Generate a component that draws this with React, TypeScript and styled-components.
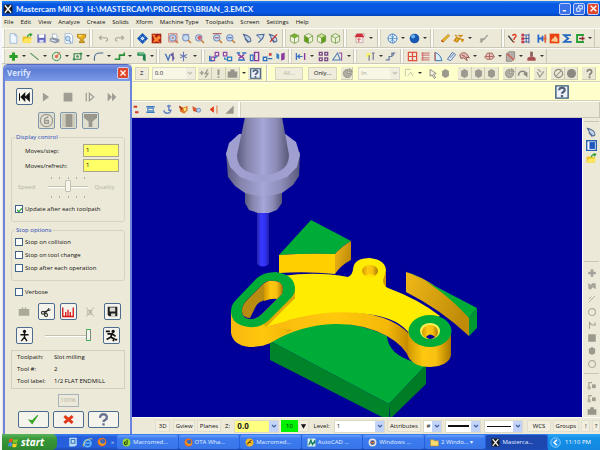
import React from "react";
import styled, { createGlobalStyle, css } from "styled-components";

const Global = createGlobalStyle`
  * { box-sizing: border-box; }
  html, body { margin: 0; height: 100%; }
  #root { height: 100%; }
  body {
    background: #fff;
    font: 6px/10px "Open Sans", "Noto Sans", sans-serif;
    color: #111;
    overflow: hidden;
  }
  button, input, select { font: inherit; color: inherit; margin: 0; padding: 0; border: 0; background: none; border-radius: 0; }
  svg { display: block; }
`;

/* ---------- icon drawings, 16 x 16 grid ---------- */

const stroke = (color: string, width = 1.6) => ({ stroke: color, strokeWidth: width, fill: "none" });

const lens = (mark: React.ReactNode) => (
  <>
    <circle cx="7" cy="7" r="4.6" fill="#c8dcf4" stroke="#7890c0" strokeWidth="1.5" />
    <path d="M10.5 10.5 L14.5 14.5" {...stroke("#c88040", 2.4)} />
    {mark}
  </>
);

const cube = (left: string, right: string, top: string) => (
  <>
    <path d="M8 1 L14 4 L8 7.5 L2 4Z" fill={top} />
    <path d="M2 4 L8 7.5 V15 L2 12Z" fill={left} />
    <path d="M14 4 L8 7.5 V15 L14 12Z" fill={right} />
    <path d="M8 1 L14 4 V12 L8 15 L2 12 V4Z M2 4 L8 7.5 L14 4 M8 7.5 V15" {...stroke("#6c9838", 1.1)} />
  </>
);

const plane = (extra: React.ReactNode) => (
  <>
    <path d="M2 2 C8 3 14 7 13 11 C12 15 7 13 2 2Z M4 8 L9 14" fill="#c4d4e8" stroke="#506890" strokeWidth="1.5" />
    {extra}
  </>
);

const grayDot = <path d="M8 1.5 L13 4.5 V11.5 L8 14.5 L3 11.5 V4.5Z" fill="#9c9a8e" />;

const drawings: Record<string, React.ReactNode> = {
  newFile: <path d="M3 1 H10 L13 4 V15 H3Z M10 1 V4 H13" fill="#eef6ff" stroke="#88a8d0" />,
  open: (
    <>
      <path d="M1 5 H6 L8 6 H13 V14 H1Z" fill="#f0c020" />
      <path d="M4 8 H15 L12 14 H1Z" fill="#ffe860" />
      <path d="M8 6 C8 2 11 2 14 2 M11 1 L14 2 L12 5" {...stroke("#30a030", 1.8)} />
    </>
  ),
  save: (
    <>
      <path d="M2 2 H14 V14 H2Z" fill="#6468c0" />
      <path d="M4 2 H12 V7 H4Z" fill="#fff" />
      <path d="M5 10 H11 V14 H5Z" fill="#d8dcf4" />
    </>
  ),
  print: (
    <>
      <path d="M5 1 L11 2 L12 8 H5Z" fill="#fff" stroke="#90a8c8" />
      <path d="M1 8 L5 6 L15 9 V13 L9 15 L1 12Z" fill="#8c98a8" />
      <path d="M3 10 L10 12" {...stroke("#e8eef8")} />
    </>
  ),
  preview: (
    <>
      <path d="M3 1 H11 L14 4 V15 H3Z" fill="#fff" stroke="#80a8d0" />
      <circle cx="7" cy="8" r="3.5" fill="#c0dcf4" stroke="#5888b8" />
      <path d="M9 11 L12 14" {...stroke("#5888b8")} />
    </>
  ),
  trophy: (
    <>
      <path d="M2 2 H14 V6 L10 9 V12 H12 V14 H5 V12 H7 V9 L2 6Z" fill="#e8b018" stroke="#986808" />
      <path d="M4 4 H8" {...stroke("#ffec80", 2)} />
    </>
  ),
  undo: <path d="M5 4 L2 7 L5 10 M2 7 H10 C15 7 15 12 11 12" {...stroke("#a8a498")} />,
  redo: <path d="M11 4 L14 7 L11 10 M14 7 H6 C1 7 1 12 5 12" {...stroke("#a8a498")} />,
  pan: (
    <>
      <path d="M8 0 L16 8 L8 16 L0 8Z" fill="#1858b8" />
      <path d="M8 5 L11 8 L8 11 L5 8Z" fill="#f4f8ff" />
      <path d="M4 4 L12 12 M12 4 L4 12" {...stroke("#80b0e8", 0.8)} />
    </>
  ),
  fit: (
    <>
      <path d="M1 1 H15 V15 H1Z" fill="#a82010" />
      <path d="M2 2 L7 3 L5 5 L8 7 L12 3 L14 8 L10 10 L14 14 L8 12 L3 14 L5 9Z" fill="#ff8830" />
    </>
  ),
  zoomWindow: lens(<path d="M1 1 H13 V13 H1Z M5 7 H9 M7 5 V9" {...stroke("#c86868", 1.2)} />),
  zoomTarget: lens(<path d="M2 2 H12" {...stroke("#7080b8", 1)} />),
  zoomIn: lens(<circle cx="8" cy="7" r="3" fill="#d86060" />),
  zoomOut: lens(<path d="M1 1 H14 M4 7 H10" {...stroke("#a04848", 1.4)} />),
  unzoom: lens(<path d="M4 7 H10" {...stroke("#4068b0", 1.6)} />),
  plane: plane(null),
  planeUp: (
    <>
      <path d="M2 3 L13 2 L11 8 L5 14 M3 3 L9 9" {...stroke("#486898", 1.8)} />
      <path d="M4 4 L12 3 L9 9Z" fill="#c4d8ec" />
    </>
  ),
  planeCut: plane(<path d="M3 13 L13 2" {...stroke("#d03020", 1.8)} />),
  cubeTop: cube("#f0f4e0", "#f0f4e0", "#78b028"),
  cubeLeft: cube("#60a018", "#e8f0d0", "#f0f4e0"),
  cubeRight: cube("#f0f4e0", "#60a018", "#c8e090"),
  cubeWire: cube("#eaf0d8", "#eaf0d8", "#eaf0d8"),
  cplane: (
    <>
      <path d="M1 4 L4 1 H15 V4 L13 6 V14 H3 V6Z" fill="#f8f0ec" stroke="#c09090" />
      <path d="M1 6 L4 1 H12 L15 6Z" fill="#d02c38" />
      <path d="M5 9 H10 M7 7 V13" {...stroke("#d86868")} />
    </>
  ),
  globe: (
    <>
      <circle cx="8" cy="8" r="6.5" fill="#e4f0fc" stroke="#4888c8" strokeWidth="1.4" />
      <path d="M1 8 H15 M8 1 V15 M4 3 C9 6 9 10 4 13 M12 3 C7 6 7 10 12 13" {...stroke("#4888c8", 1)} />
    </>
  ),
  sphere: (
    <>
      <circle cx="8" cy="8" r="7" fill="#1858b0" />
      <circle cx="6" cy="5" r="3" fill="#68b0f0" />
    </>
  ),
  eraser: (
    <>
      <path d="M2 11 L12 2 L14 4 L5 13Z" fill="#f0b820" stroke="#a88028" />
      <path d="M2 11 L5 13" {...stroke("#c05020", 2)} />
    </>
  ),
  eraserDots: <path d="M2 11 L6 13 L10 8 L5 7Z M8 3 L11 5 L14 3 M11 9 L15 10 L13 13 M3 3 L6 5" fill="#e8b828" stroke="#c88818" strokeWidth="2" />,
  grayPen: <path d="M3 13 L7 8 L9 9 L14 3 M4 9 H8 L5 13Z" {...stroke("#a4a298", 2)} />,
  analyze: (
    <>
      <path d="M2 4 L9 13" {...stroke("#484040", 2)} />
      <path d="M8 4 C9 1 14 2 13 5 C12 7 10 7 10 10 M10 12 V14" {...stroke("#e03818", 2)} />
    </>
  ),
  levels: (
    <>
      <path d="M2 1 H6 V5 H2Z M2 6 H6 V10 H2Z M2 11 H6 V15 H2Z" fill="#c83850" />
      <path d="M6 3 H13 M6 8 H13 M6 13 H13 M13 1 V15 M9 4 V13" {...stroke("#4860a8", 1.6)} />
    </>
  ),
  mirrorBlue: (
    <>
      <path d="M2 2 V14 M2 8 H8 M8 4 V12" {...stroke("#2868c8", 2.6)} />
      <path d="M12 2 V14 M9 8 H14" {...stroke("#e06840", 2.6)} />
    </>
  ),
  flame: (
    <>
      <path d="M1 1 H15 V15 H1Z" fill="#e84010" />
      <path d="M3 12 C5 6 8 9 8 4 C14 7 13 12 12 13Z" fill="#ffc890" />
    </>
  ),
  sigma: <path d="M13 3 H3 L9 8 L3 13 H14" {...stroke("#2068c0", 2.6)} />,
  loop: (
    <>
      <path d="M13 3 H3 V13 H13" {...stroke("#28a038", 2.8)} />
      <path d="M6 8 H14 M11 5 V11" {...stroke("#902838", 2)} />
    </>
  ),
  plus: <path d="M8 2 V14 M2 8 H14" {...stroke("#28a028", 4.4)} />,
  line: <path d="M2 3 L14 13" {...stroke("#489058", 1.5)} />,
  circle: (
    <>
      <circle cx="8" cy="8" r="6" {...stroke("#30904c", 1.4)} />
      <circle cx="8" cy="8" r="2.4" fill="#e07050" />
      <path d="M8 8 L13 2" {...stroke("#e07050")} />
    </>
  ),
  rect: (
    <>
      <path d="M3 4 H13 V12 H3Z" {...stroke("#308048", 1.6)} />
      <path d="M7 7 H9 V9 H7Z M1 12 H5 M11 4 H15 M3 10 V14 M13 2 V6" {...stroke("#308848", 1.4)} />
    </>
  ),
  fillet: <path d="M2 14 V10 C2 5 6 3 10 3 H15" {...stroke("#4c6890", 1.6)} />,
  spline: <path d="M1 12 H8 V6 H15 V2" {...stroke("#289038", 2.4)} />,
  solid: (
    <>
      <path d="M2 2 H11 L14 5 V15 L10 13 V7 H2Z" fill="#208048" />
      <path d="M2 2 H11 L14 5 H5Z" fill="#70c090" />
    </>
  ),
  axes: (
    <>
      <path d="M2 4 L6 13 L9 5" {...stroke("#4070b8", 2)} />
      <path d="M13 2 V14 M10 4 L15 11" {...stroke("#6850a0", 2)} />
    </>
  ),
  starAxes: <path d="M8 1 V15 M3 5 L13 10 M13 5 L3 10" {...stroke("#6878b8", 1.6)} />,
  xformA: (
    <>
      <path d="M9 2 H14 V7 H9Z M3 9 H8 V14 H3Z" {...stroke("#9048a8", 1.8)} />
      <path d="M1 7 V14 H6 M8 10 L12 8" {...stroke("#2870c0", 2)} />
    </>
  ),
  xformB: (
    <>
      <path d="M2 2 H7 V7 H2Z" {...stroke("#9048a8", 1.8)} />
      <path d="M8 9 H14 V14 H8Z M4 9 V12 H8" {...stroke("#2878c0", 1.8)} />
    </>
  ),
  xformC: (
    <>
      <path d="M1 3 H6 M9 3 H15 M3 13 H13" {...stroke("#2870c0", 2.2)} />
      <path d="M3 5 L12 11 M12 5 L4 11" {...stroke("#8838a0", 2)} />
    </>
  ),
  xformD: (
    <>
      <path d="M8 2 H14 V14 H8Z" {...stroke("#8838a0", 2)} />
      <path d="M2 6 H6 V14 H2Z" {...stroke("#2870c0", 1.6)} />
    </>
  ),
  xformE: (
    <>
      <path d="M2 9 H7 V14 H2Z M9 11 H15" {...stroke("#2870c0", 2)} />
      <path d="M10 3 H14 V7 H10Z" fill="#d04848" />
    </>
  ),
  xformF: (
    <>
      <path d="M2 3 L6 5 V12 L2 10Z" fill="#3080c8" />
      <path d="M9 4 L14 2 V12 L9 14Z" fill="#8838a0" />
    </>
  ),
  arrowBar: (
    <>
      <path d="M2 3 V13 M4 8 H11 M7 5 L4 8 L7 11" {...stroke("#3870c0", 1.8)} />
      <path d="M14 3 V13" {...stroke("#8838a0", 2)} />
    </>
  ),
  fourSquares: <path d="M2 2 H6 V6 H2Z M10 2 H14 V6 H10Z M2 10 H6 V14 H2Z M10 10 H14 V14 H10Z" {...stroke("#784888", 2)} />,
  triangle: (
    <>
      <path d="M1 13 L8 3 L12 13Z" {...stroke("#4878b8", 1.5)} />
      <path d="M10 3 H14 V14" {...stroke("#9048a0", 1.5)} />
    </>
  ),
  bulb: (
    <>
      <path d="M2 3 H8 V9 H2Z" fill="#f8f070" />
      <path d="M6 6 V14 M12 3 V13 M10 3 H14" {...stroke("#788090", 1.8)} />
    </>
  ),
  steps: <path d="M1 13 H6 V8 H10 V3 H15 M12 3 V7" {...stroke("#6c7ca0", 1.8)} />,
  gridRed: <path d="M2 2 H14 V14 H2Z M8 2 V14 M2 8 H14" {...stroke("#e05040", 1.8)} />,
  linesRed: <path d="M2 3 H14 M2 6 H14 M2 10 H14 M2 13 H14 M4 2 V14" {...stroke("#c86868", 1.4)} />,
  fan: (
    <>
      <path d="M3 14 V2 C9 4 12 9 13 14Z" fill="#d8ecfa" stroke="#3078b0" strokeWidth="1.4" />
      <path d="M3 2 V14" {...stroke("#d06050")} />
    </>
  ),
  tube: <path d="M2 12 L9 2 L14 5 L7 14Z M6 10 L11 4" fill="#dce8f4" stroke="#5878a8" strokeWidth="1.4" />,
  fish: <path d="M1 6 C4 1 10 2 12 5 L15 10 L10 9 L12 14 L7 10 L3 11Z M4 6 L9 8" fill="#e0b8b0" stroke="#985850" strokeWidth="1.4" />,
  patch: <path d="M1 9 L5 3 H12 L15 9 L11 12 H4Z M8 3 V12 M2 8 H14" fill="#e8c0b8" stroke="#a86860" strokeWidth="1.4" />,
  hatched: (
    <>
      <path d="M2 4 L6 1 H14 V11 L10 15 H2Z" fill="#b4aca8" stroke="#807870" />
      <path d="M3 4 L13 13" {...stroke("#d05848", 2)} />
    </>
  ),
  tower: (
    <>
      <path d="M6 1 H10 V8 H6Z" fill="#8c6060" />
      <path d="M2 14 V10 L6 8 H10 L14 10 V14Z" fill="#a85050" />
    </>
  ),
  help: (
    <>
      <path d="M1 1 H15 V15 H1Z" fill="#eef2f8" stroke="#34587c" strokeWidth="1.6" />
      <path d="M5 6 C4 2 12 2 11 6 C11 8 8 8 8 10 M8 11.5 V14" {...stroke("#506078", 2.6)} />
    </>
  ),
  gBolt: <path d="M1 7 H7 M4 4 V10 M13 2 L9 8 H13 L9 14" {...stroke("#a09e90", 2)} />,
  gBang: <path d="M8 2 V10 M8 12 V14" {...stroke("#98968a", 2.8)} />,
  gBox: <path d="M1 5 H5 V2 H11 V5 H15 V14 H1Z" fill="#98968a" />,
  gCursor: <path d="M3 2 L12 8 L8 9 L11 14 L9 15 L6 10 L3 12Z" fill="#f4f2e4" stroke="#88867a" strokeWidth="1.3" />,
  gDot: grayDot,
  gPie: <path d="M8 2 A6 6 0 1 0 14 8 H8Z M10 1 A6 6 0 0 1 15 6 H10Z" fill="#b0aea2" stroke="#88867a" />,
  gArc: <path d="M2 11 C3 3 12 3 13 9 M10 8 L14 11 L14 6" {...stroke("#8c8a80", 2.4)} />,
  gCheck: <path d="M3 6 L7 13 L13 5 M4 2 L9 6" {...stroke("#98968a", 1.6)} />,
  gNo: <path d="M8 2 A6 6 0 1 0 8.1 2 M4 12 L12 4" {...stroke("#8c8a80", 1.5)} />,
  gRound: <circle cx="8" cy="8" r="6.6" fill="#8c8a80" />,
  gQuestion: <path d="M5 6 C4 1 12 1 11 6 C11 8 8 8 8 11 M8 12 V15" {...stroke("#88867a", 2.6)} />,
  gSelect: <path d="M2 2 H10 M2 2 V12 M5 12 L10 6 L13 12" {...stroke("#c4c2a8", 1.3)} />,
  gPlus: <path d="M8 2 V14 M2 8 H14" {...stroke("#a4a298", 4.2)} />,
  gWave: <path d="M2 3 L6 6 L9 3 L14 4 V13 L9 10 L6 14 L2 12Z" fill="#a8a69a" />,
  gSlash: <path d="M3 13 L13 3 M3 8 L7 4" {...stroke("#aeac9f", 1.5)} />,
  gRing: <circle cx="8" cy="8" r="5.5" {...stroke("#b0ae9f", 1.8)} />,
  gFlag: <path d="M4 14 V4 L8 8 H13 V4" {...stroke("#a4a298", 1.8)} />,
  gSquare: <path d="M2 2 H14 V14 H2Z" fill="#9c9a8e" />,
  gNodes: (
    <>
      <path d="M3 12 V4 H8" {...stroke("#a8a69a", 2)} />
      <path d="M8 7 H14 V13 H8Z" fill="#a09e92" />
      <path d="M1 10 H6 V15 H1Z" fill="#b4b2a6" />
    </>
  ),
  surface: (
    <>
      <path d="M2 4 H14 M2 12 H14" {...stroke("#3878c0", 2.4)} />
      <path d="M4 6 H12 V10 H4Z" {...stroke("#4888c8", 1.6)} />
    </>
  ),
  hook: <path d="M10 1 V8 M7 3 H13 M3 9 C3 15 12 15 13 9 H9" {...stroke("#6080c0", 2)} />,
  shield: (
    <>
      <path d="M2 3 L8 5 L14 3 V9 L9 14 L3 11Z" fill="#e07828" />
      <path d="M8 6 L12 5 V9 L9 11Z" fill="#f4e870" />
      <path d="M2 3 L6 8" {...stroke("#a02818", 2)} />
    </>
  ),
  shield2: (
    <>
      <path d="M2 3 L8 6 L9 12 L3 10Z" fill="#d85830" />
      <circle cx="11" cy="9" r="3" fill="#b0d0f0" stroke="#5078b0" />
    </>
  ),
  redArrow: (
    <>
      <path d="M8 4 L3 8 L8 12Z" fill="#e03818" stroke="#e03818" />
      <path d="M13 2 V14" {...stroke("#e08058", 1.6)} />
    </>
  ),
  ramp: <path d="M2 14 L14 2 V14Z" fill="#98968c" />,
  redDash: <path d="M1 4 H6 M3 12 H8" {...stroke("#d03828", 3)} />,
  blueWindow: (
    <>
      <path d="M1 1 H15 V15 H1Z" fill="#fff" stroke="#2860b0" strokeWidth="2" />
      <path d="M5 3 H13 V13 H5Z" fill="#2058c0" />
    </>
  ),
  rewind: <path d="M2 3 V13 M9 3 L4 8 L9 13Z M15 3 L10 8 L15 13Z" fill="#111" stroke="#111" strokeWidth="1.4" />,
  play: <path d="M3 1 L13 8 L3 15Z" fill="#a09e94" />,
  stop: <path d="M1 1 H15 V15 H1Z" fill="#a09e94" />,
  stepFwd: <path d="M2 1 V15 M7 2 L14 8 L7 14Z" {...stroke("#a09e94", 2)} />,
  fast: <path d="M1 1 L8 8 L1 15Z M8 1 L15 8 L8 15Z" fill="#a09e94" />,
  coin: (
    <>
      <circle cx="8" cy="8" r="6.5" fill="#e4e2d6" stroke="#9c9a90" strokeWidth="1.3" />
      <path d="M10 4 L6 6 V11 H10 V8 H6" {...stroke("#9c9a90", 1.5)} />
    </>
  ),
  holder: (
    <>
      <path d="M1 1 H15 V15 H1Z" fill="#cccab8" />
      <path d="M5 1 H12 V15 H5Z" fill="#9a988c" />
    </>
  ),
  funnel: <path d="M1 1 H15 V5 L10 9 V15 H6 V9 L1 5Z" fill="#9a988c" />,
  stock: <path d="M1 4 H5 V2 H7 V4 H9 V2 H11 V4 H15 V13 H1Z" fill="#aaa898" />,
  scissors: (
    <>
      <circle cx="4" cy="9" r="2" {...stroke("#222", 1.5)} />
      <circle cx="8" cy="12" r="2" {...stroke("#222", 1.5)} />
      <path d="M5 8 L14 5 M7 10 L12 3" {...stroke("#222", 1.5)} />
    </>
  ),
  chart: <path d="M1 2 V14 H15 V2 M5 14 V8 M8 14 V5 M11 14 V8" {...stroke("#d81818", 1.8)} />,
  burst: <path d="M3 2 L13 14 M13 2 L3 14 M5 6 H10 V11 H5Z" {...stroke("#b4b2a6", 1.3)} />,
  disk: (
    <>
      <path d="M1 1 H15 V15 H3 L1 13Z" fill="#222" />
      <path d="M4 2 H12 V8 H4Z M6 11 H12 V15 H6Z" fill="#dcdcd4" />
    </>
  ),
  walker: (
    <>
      <circle cx="8" cy="3" r="2" fill="#111" />
      <path d="M8 5 V10 M3 7 H13 M8 10 L4 15 M8 10 L11 15" {...stroke("#111", 1.7)} />
    </>
  ),
  runner: (
    <>
      <circle cx="10" cy="3" r="2" fill="#111" />
      <path d="M9 5 L7 10 L11 12 L10 15 M7 10 L2 13 M3 6 L9 6 L13 9 M1 3 H6 M12 13 H15" {...stroke("#111", 2.1)} />
    </>
  ),
  tick: <path d="M2 9 L6 14 L14 2 L6 10Z" fill="#38a828" stroke="#38a828" strokeWidth="1.6" />,
  cross: <path d="M2 3 L14 13 M14 3 L2 13" {...stroke("#e03818", 4.4)} />,
  bigHelp: <path d="M4 6 C3 0 13 0 12 6 C12 9 8 8 8 11 M8 12.5 V15.5" {...stroke("#687490", 3)} />,
  ie: (
    <>
      <circle cx="8" cy="9" r="5" {...stroke("#60b8f8", 2.4)} />
      <path d="M4 9 H13" {...stroke("#60b8f8", 2)} />
      <path d="M2 14 C0 9 10 0 15 3" {...stroke("#f0d060", 1.2)} />
    </>
  ),
  desktop: (
    <>
      <path d="M2 1 H14 V13 L10 15 H2Z" fill="#b8dcf4" />
      <path d="M5 4 H11 V10 H5Z" {...stroke("#3878c0", 1.8)} />
    </>
  ),
  firefox: (
    <>
      <circle cx="8" cy="8" r="7" fill="#e87018" />
      <circle cx="9" cy="7" r="4" fill="#4068b8" />
      <path d="M2 4 C4 6 4 9 9 11 C12 11 13 9 14 7 C15 15 3 16 2 4Z" fill="#f8a828" />
    </>
  ),
  green: (
    <>
      <circle cx="8" cy="8" r="7" fill="#98d838" />
      <path d="M9 3 V9 A2.4 2.4 0 1 1 7 7" {...stroke("#284810", 2)} />
    </>
  ),
  yellowApp: (
    <>
      <circle cx="8" cy="8" r="7" fill="#f0b828" />
      <path d="M3 11 C7 11 7 4 12 4 M5 8 H11" {...stroke("#705010", 1.8)} />
    </>
  ),
  acad: (
    <>
      <path d="M1 1 H15 V15 H1Z" fill="#d8f0e4" />
      <path d="M3 13 L7 3 L10 13 M4 9 H14 V4 L10 12" {...stroke("#107860", 1.8)} />
    </>
  ),
  media: (
    <>
      <circle cx="8" cy="8" r="7" fill="#e8e4dc" />
      <circle cx="8" cy="8" r="4" fill="#284890" />
      <path d="M5 8 H11" {...stroke("#f08030", 3)} />
    </>
  ),
  folder: <path d="M1 3 H6 L8 5 H15 V14 H1Z" fill="#f8dc70" stroke="#c09028" />,
  mcx: (
    <>
      <path d="M1 1 H15 V15 H1Z" fill="#181818" />
      <path d="M3 2 L13 14 M13 2 L3 14" {...stroke("#f4f4f4", 2.4)} />
    </>
  ),
  tray: (
    <>
      <circle cx="8" cy="8" r="7" fill="#2898f0" stroke="#a8e0ff" />
      <path d="M10 4 L6 8 L10 12" {...stroke("#fff", 2)} />
    </>
  ),
  flag: (
    <>
      <path d="M2 3 Q5 1 7 3 L6 8 Q4 6 1 8Z" fill="#f05820" />
      <path d="M8 3 Q11 5 15 3 L13 8 Q11 9 7 8Z" fill="#80c828" />
      <path d="M1 9 Q4 7 6 9 L5 14 Q3 12 0 14Z" fill="#4890f0" />
      <path d="M7 9 Q10 11 13 9 L12 14 Q9 16 6 14Z" fill="#f8d028" />
    </>
  ),
  down: <path d="M4 6 L8 10 L12 6" {...stroke("#4060a0", 2.4)} />,
  downGray: <path d="M4 6 L8 10 L12 6" {...stroke("#c0beb0", 2.4)} />,
  solidDown: <path d="M2 3 H14 L8 13Z" fill="#111" />,
  minimize: <path d="M3 12 H9" {...stroke("#fff", 2.4)} />,
  restore: <path d="M6 6 V3 H13 V9 H10 M3 7 H9 V13 H3Z" {...stroke("#fff", 1.6)} />,
  close: <path d="M3 3 L13 13 M13 3 L3 13" {...stroke("#fff", 2.4)} />,
};

const Icon = ({ name, size = 12 }: { name: string; size?: number }) => (
  <svg width={size} height={size} viewBox="0 0 16 16" aria-hidden="true">
    {drawings[name]}
  </svg>
);

/* ---------- application frame ---------- */

const Window = styled.main`
  display: flex;
  flex-direction: column;
  min-height: 100vh;
  background: #ece9d8;
  padding-top: 1px;
  border-left: 2px solid #f4f6fa;
`;

const TitleBar = styled.header`
  display: flex;
  align-items: center;
  gap: 3px;
  height: 15px;
  padding-left: 1px;
  background: linear-gradient(#2a86f4, #0a58e0 20%, #0658e4 75%, #0444bc);
`;

const Title = styled.h1`
  flex: 1;
  margin: 0;
  color: #e8f0ff;
  font: bold 8px/14px Lato, sans-serif;
  white-space: pre;
`;

const Caption = styled.div`
  display: flex;
  gap: 2px;
  padding-right: 1px;
`;

const CaptionButton = styled.button<{ $danger?: boolean }>`
  display: grid;
  place-items: center;
  width: 12px;
  height: 12px;
  border: 1px solid #c0d0f8;
  border-radius: 2px;
  background: ${(p) => (p.$danger ? "#e0482c" : "#3a70e8")};
`;

const MenuBar = styled.nav`
  display: flex;
  align-items: center;
  gap: 7px;
  height: 12px;
  padding: 0 2px;
`;

const MenuItem = styled.button`
  line-height: 12px;
`;

const ToolRow = styled.div<{ $height: number }>`
  display: flex;
  height: ${(p) => p.$height}px;
  border-top: 1px solid #fbfaf4;
  border-bottom: 1px solid #cbc8b8;
`;

const ToolGroup = styled.div<{ $span: number }>`
  display: flex;
  align-items: center;
  flex: ${(p) => p.$span} 1 0;
  min-width: 0;
  padding-left: 4px;
  border-right: 1px solid #c9c6b6;
  box-shadow: inset 2px 0 #fbfaf4, inset 3px 0 #d4d1c2;
`;

const ToolButton = styled.button<{ $raised?: boolean }>`
  display: grid;
  place-items: center;
  flex: 13 1 0;
  min-width: 0;
  height: 13px;
  ${(p) => p.$raised && css`background: #ebe8d4; box-shadow: inset -1px -1px #cfccb4;`}
`;

const Caret = styled.button`
  display: grid;
  place-items: center;
  flex: 8 1 0;
  min-width: 0;
  height: 13px;
  &::before {
    content: "";
    border: 2px solid transparent;
    border-top-color: #333;
    border-bottom: 0;
  }
`;

const Spacer = styled.span<{ $grow: number }>`
  flex: ${(p) => p.$grow} 1 0;
`;

type Group = { span: number; tools: string };

/* "name" is a tool, "v" a drop-down arrow, a number an empty stretch */
const Tools = ({ list, raised }: { list: string; raised?: boolean }) => (
  <>
    {list.split(" ").map((t, i) =>
      t === "v" ? (
        <Caret key={i} aria-label="More" />
      ) : /^\d+$/.test(t) ? (
        <Spacer key={i} $grow={Number(t)} />
      ) : (
        <ToolButton key={i} aria-label={t} $raised={raised}>
          <Icon name={t} size={11} />
        </ToolButton>
      ),
    )}
  </>
);

const ToolGroups = ({ groups }: { groups: Group[] }) => (
  <>
    {groups.map((g, i) => (
      <ToolGroup key={i} $span={g.span}>
        <Tools list={g.tools} />
      </ToolGroup>
    ))}
  </>
);

const fileTools: Group[] = [
  { span: 86, tools: "1 newFile open save print preview trophy" },
  { span: 38, tools: "2 undo redo 3" },
  { span: 152, tools: "1 pan fit 4 zoomWindow zoomTarget zoomIn 4 zoomOut unzoom 4 plane planeUp planeCut 1" },
  { span: 59, tools: "1 cubeTop cubeLeft cubeRight cubeWire 1" },
  { span: 30, tools: "4 cplane v 2" },
  { span: 50, tools: "3 globe v sphere v 1" },
  { span: 68, tools: "3 eraser eraserDots v 3 grayPen 10" },
  { span: 92, tools: "1 analyze levels 4 mirrorBlue flame sigma loop v" },
];

const sketchTools: Group[] = [
  { span: 153, tools: "1 plus v line v circle v rect v fillet v spline v solid v" },
  { span: 41, tools: "1 axes starAxes v 1" },
  { span: 84, tools: "2 xformA xformB xformC xformD xformE xformF 1" },
  { span: 61, tools: "arrowBar v fourSquares triangle v" },
  { span: 43, tools: "6 bulb v steps 3" },
  { span: 144, tools: "1 gridRed linesRed fan tube fish v 4 patch v hatched v tower v" },
];

const Body = styled.div`
  display: grid;
  grid-template-columns: 130px minmax(0, 1fr);
  flex: 1;
`;

const Work = styled.section`
  display: flex;
  flex-direction: column;
  min-width: 0;
`;

const Ribbon = styled.div<{ $height: number }>`
  display: flex;
  align-items: center;
  height: ${(p) => p.$height}px;
  background: #ffffcc;
  border-top: 1px solid #fffff0;
  border-bottom: 1px solid #d4d0b4;
`;

const Cluster = styled.div<{ $span: number }>`
  display: flex;
  flex: ${(p) => p.$span} 1 0;
  min-width: 0;
  align-items: center;
`;

const Divider = styled.i`
  width: 2px;
  align-self: stretch;
  background: #c8c5ac;
  border-right: 1px solid #fff;
`;

const HelpLine = styled(Ribbon)`
  justify-content: flex-end;
  padding-right: 31px;
`;

const PlainButton = styled.button<{ $muted?: boolean; $span: number }>`
  flex: ${(p) => p.$span} 1 0;
  min-width: 0;
  height: 13px;
  white-space: nowrap;
  overflow: hidden;
  background: #f0eddc;
  border: 1px solid #d8d4bc;
  color: ${(p) => (p.$muted ? "#b4b2a0" : "#111")};
`;

const ComboFrame = styled.label<{ $span: number; $tone?: string }>`
  display: grid;
  grid-template-columns: minmax(0, 1fr) 9px;
  align-items: center;
  flex: ${(p) => p.$span} 1 0;
  min-width: 0;
  height: 13px;
  background: ${(p) => p.$tone ?? "#fff"};
  border: 1px solid #dcd9c8;
`;

const ComboSelect = styled.select<{ $bold?: boolean; $faint?: boolean }>`
  appearance: none;
  grid-area: 1 / 1 / 2 / 3;
  width: 100%;
  padding-left: 2px;
  outline: 0;
  color: ${(p) => (p.$faint ? "#aaa898" : "#222")};
  font-weight: ${(p) => (p.$bold ? "bold" : "normal")};
  font-size: ${(p) => (p.$bold ? 8 : 6)}px;
`;

const ComboArrow = styled.span<{ $muted?: boolean }>`
  grid-area: 1 / 2;
  display: grid;
  place-items: center;
  height: 11px;
  pointer-events: none;
  background: ${(p) => (p.$muted ? "#f0eedf" : "#c4d4f8")};
`;

const LineSample = styled.span<{ $weight: number }>`
  grid-area: 1 / 1;
  margin: 0 2px;
  border-top: ${(p) => p.$weight}px solid #111;
  pointer-events: none;
`;

type ComboProps = {
  label: string;
  value: string;
  span: number;
  muted?: boolean;
  faint?: boolean;
  bold?: boolean;
  tone?: string;
  line?: number;
};

const Combo = ({ label, value, span, muted, faint, bold, tone, line }: ComboProps) => (
  <ComboFrame $span={span} $tone={tone}>
    <ComboSelect aria-label={label} $faint={faint} $bold={bold}>
      <option>{value}</option>
    </ComboSelect>
    {line ? <LineSample $weight={line} /> : null}
    <ComboArrow $muted={muted}>
      <Icon name={muted ? "downGray" : "down"} size={8} />
    </ComboArrow>
  </ComboFrame>
);

const ViewRow = styled.div`
  display: grid;
  grid-template-columns: minmax(0, 1fr) 18px;
  flex: 1;
`;

const Viewport = styled.div`
  display: flex;
  background: #000098;
  overflow: hidden;
  svg { flex: 1; width: 100%; }
`;

const SideBar = styled.aside`
  display: flex;
  flex-direction: column;
  align-items: center;
  border-left: 1px solid #fff;
  overflow: hidden;
`;

const SideGroup = styled.div<{ $grow?: boolean }>`
  display: flex;
  flex-direction: column;
  align-items: center;
  width: 15px;
  padding-top: 4px;
  border-top: 1px solid #c9c6b6;
  margin-top: 3px;
  flex: ${(p) => (p.$grow ? "1" : "none")};
`;

const SideButton = styled.button`
  display: grid;
  place-items: center;
  width: 13px;
  height: 13px;
`;

const StatusBar = styled.footer`
  display: flex;
  align-items: center;
  height: 17px;
  background: #ece9d8;
  border-top: 1px solid #fbfaf4;
  overflow: hidden;
`;

const StatusButton = styled.button<{ $span: number; $tone?: string }>`
  display: grid;
  place-items: center;
  flex: ${(p) => p.$span} 1 0;
  min-width: 0;
  height: 12px;
  white-space: nowrap;
  background: ${(p) => p.$tone ?? "#f1eee0"};
  box-shadow: inset 0 0 0 1px ${(p) => p.$tone ?? "#e2dfce"};
`;

const StatusText = styled.span<{ $span: number }>`
  flex: ${(p) => p.$span} 1 0;
  white-space: nowrap;
  text-align: center;
`;

/* ---------- verify dialog ---------- */

const Dialog = styled.section`
  display: flex;
  flex-direction: column;
  margin-left: 1px;
  background: #ece9d8;
  border: solid #6c84dc;
  border-width: 0 2px;
  border-radius: 5px 5px 0 0;
  overflow: hidden;
`;

const DialogTitle = styled.header`
  display: flex;
  align-items: center;
  height: 17px;
  padding: 0 1px 0 2px;
  background: linear-gradient(#7c94e0, #5c7cd4 30%, #7c9ce8);
  border-top: 1px solid #5468c0;
`;

const DialogName = styled.h2`
  flex: 1;
  margin: 0;
  color: #dce6ff;
  font: bold 8px/14px "Open Sans", sans-serif;
`;

const DialogBody = styled.div`
  display: flex;
  flex-direction: column;
  padding: 7px 5px 4px 6px;
`;

const ButtonLine = styled.div<{ $gap: number; $top?: number }>`
  display: flex;
  align-items: center;
  justify-content: center;
  gap: ${(p) => p.$gap}px;
  margin-top: ${(p) => p.$top ?? 0}px;
`;

const SquareButton = styled.button<{ $flat?: boolean; $wide?: boolean; $tint?: boolean }>`
  display: grid;
  place-items: center;
  width: ${(p) => (p.$wide ? 31 : 17)}px;
  height: 17px;
  border-radius: 2px;
  border: 1px solid ${(p) => (p.$flat ? "transparent" : p.$tint ? "#8098ac" : "#4c6c90")};
  background: ${(p) => (p.$flat ? "transparent" : p.$tint ? "#e0decf" : "#f4f3ec")};
`;

const GroupBox = styled.fieldset<{ $top: number }>`
  min-width: 0;
  margin: ${(p) => p.$top}px 0 0;
  padding: 3px 3px 4px;
  border: 1px solid #d6d3c4;
  border-radius: 3px;
`;

const Legend = styled.legend`
  padding: 0 1px;
  color: #1c48b8;
  line-height: 8px;
`;

const FieldLine = styled.label`
  display: grid;
  grid-template-columns: 58px 36px;
  align-items: center;
  height: 13px;
  margin: 0 0 2px 10px;
`;

const NumberBox = styled.input`
  width: 100%;
  height: 13px;
  padding: 0 2px 2px;
  background: #ffff66;
  border: 1px solid #a8a888;
`;

const SpeedLine = styled.div`
  display: grid;
  grid-template-columns: 30px 40px 1fr;
  align-items: center;
  height: 26px;
  margin: 0 0 4px 3px;
  color: #b4b2a4;
`;

const TickedSlider = styled.div`
  display: grid;
  gap: 2px;
`;

const Ticks = styled.div`
  display: flex;
  justify-content: space-between;
  margin: 0 3px;
  i { width: 1px; height: 2px; background: #b4b2a4; }
`;

const Slider = styled.input<{ $green?: boolean }>`
  appearance: none;
  width: 100%;
  height: 13px;
  display: block;
  &::-webkit-slider-runnable-track {
    height: 2px;
    background: #c4c1b2;
    border-bottom: 1px solid #fff;
  }
  &::-webkit-slider-thumb {
    appearance: none;
    width: ${(p) => (p.$green ? 5 : 6)}px;
    height: 12px;
    margin-top: -6px;
    background: #f6f5ee;
    border: 1px solid ${(p) => (p.$green ? "#70907c" : "#c4c1b2")};
    border-block-color: ${(p) => (p.$green ? "#30b850" : "#c4c1b2")};
    border-radius: 1px;
  }
`;

const SpeedTrack = styled.div`
  width: 46px;
`;

const CheckLine = styled.label<{ $inset?: boolean }>`
  display: flex;
  align-items: center;
  gap: 2px;
  height: 10px;
  margin-bottom: 3px;
  white-space: nowrap;
  ${(p) => p.$inset && css`margin: 6px 0 3px 4px;`}
`;

const CheckBox = styled.input`
  appearance: none;
  display: grid;
  place-items: center;
  width: 8px;
  height: 8px;
  background: #fff;
  border: 1px solid #406488;
  &:checked::before {
    content: "";
    width: 4px;
    height: 2px;
    border: solid #18a018;
    border-width: 0 0 1px 1px;
    transform: rotate(-45deg);
  }
`;

const Facts = styled.dl`
  display: grid;
  grid-template-columns: 37px 1fr;
  margin: 6px 0 0;
  padding: 0 0 1px 5px;
  border: 1px solid #d2cfc0;
  line-height: 12px;
  white-space: nowrap;
  dt, dd { margin: 0; }
`;

const Percent = styled.output`
  align-self: center;
  margin-top: 5px;
  width: 21px;
  border: 1px solid #a8b4bc;
  color: #b4b2a4;
  text-align: center;
  line-height: 11px;
`;

const VerifyDialog = () => (
  <Dialog aria-label="Verify">
    <DialogTitle>
      <DialogName>Verify</DialogName>
      <CaptionButton $danger aria-label="Close"><Icon name="close" size={8} /></CaptionButton>
    </DialogTitle>
    <DialogBody>
      <ButtonLine $gap={5}>
        <SquareButton aria-label="Rewind"><Icon name="rewind" /></SquareButton>
        {["play", "stop", "stepFwd", "fast"].map((n) => (
          <SquareButton key={n} $flat aria-label={n}><Icon name={n} size={10} /></SquareButton>
        ))}
      </ButtonLine>
      <ButtonLine $gap={5} $top={7}>
        {["coin", "holder", "funnel"].map((n) => (
          <SquareButton key={n} $tint aria-label={n}><Icon name={n} size={15} /></SquareButton>
        ))}
      </ButtonLine>
      <GroupBox $top={4}>
        <Legend>Display control</Legend>
        <FieldLine>Moves/step:<NumberBox defaultValue="1" /></FieldLine>
        <FieldLine>Moves/refresh:<NumberBox defaultValue="1" /></FieldLine>
        <SpeedLine>
          Speed
          <TickedSlider>
            <Ticks><i /><i /><i /><i /><i /></Ticks>
            <Slider type="range" aria-label="Speed and quality" defaultValue={50} disabled />
            <Ticks><i /><i /><i /><i /><i /></Ticks>
          </TickedSlider>
          <StatusText $span={1}>Quality</StatusText>
        </SpeedLine>
        <CheckLine><CheckBox type="checkbox" defaultChecked />Update after each toolpath</CheckLine>
      </GroupBox>
      <GroupBox $top={4}>
        <Legend>Stop options</Legend>
        <CheckLine><CheckBox type="checkbox" />Stop on collision</CheckLine>
        <CheckLine><CheckBox type="checkbox" />Stop on tool change</CheckLine>
        <CheckLine><CheckBox type="checkbox" />Stop after each operation</CheckLine>
      </GroupBox>
      <CheckLine $inset><CheckBox type="checkbox" />Verbose</CheckLine>
      <ButtonLine $gap={5} $top={3}>
        <SquareButton $flat aria-label="Stock"><Icon name="stock" /></SquareButton>
        <SquareButton aria-label="Section"><Icon name="scissors" /></SquareButton>
        <SquareButton aria-label="Compare"><Icon name="chart" /></SquareButton>
        <SquareButton $flat aria-label="Measure"><Icon name="burst" /></SquareButton>
        <SquareButton aria-label="Save"><Icon name="disk" size={11} /></SquareButton>
      </ButtonLine>
      <ButtonLine $gap={12} $top={7}>
        <SquareButton aria-label="Slower"><Icon name="walker" size={13} /></SquareButton>
        <SpeedTrack><Slider $green type="range" aria-label="Speed" defaultValue={100} /></SpeedTrack>
        <SquareButton aria-label="Faster"><Icon name="runner" size={13} /></SquareButton>
      </ButtonLine>
      <Facts>
        <dt>Toolpath:</dt><dd>Slot milling</dd>
        <dt>Tool #:</dt><dd>2</dd>
        <dt>Tool label:</dt><dd>1/2 FLAT ENDMILL</dd>
      </Facts>
      <Percent>100%</Percent>
      <ButtonLine $gap={4} $top={4}>
        <SquareButton $wide aria-label="OK"><Icon name="tick" size={11} /></SquareButton>
        <SquareButton $wide aria-label="Cancel"><Icon name="cross" size={11} /></SquareButton>
        <SquareButton $wide aria-label="Help"><Icon name="bigHelp" size={13} /></SquareButton>
      </ButtonLine>
    </DialogBody>
  </Dialog>
);

/* ---------- machining scene ---------- */

const Scene = () => (
  <svg viewBox="132 118 450 299" preserveAspectRatio="xMidYMin slice" role="img" aria-label="Tool path simulation">
    <defs>
      <linearGradient id="steel">
        <stop offset="0" stopColor="#5c5c80" />
        <stop offset="0.2" stopColor="#8484ac" />
        <stop offset="0.5" stopColor="#a6a6d8" />
        <stop offset="0.75" stopColor="#8c8cb8" />
        <stop offset="1" stopColor="#585878" />
      </linearGradient>
      <linearGradient id="shank">
        <stop offset="0" stopColor="#2424a8" />
        <stop offset="0.35" stopColor="#3838ff" />
        <stop offset="0.7" stopColor="#3030f4" />
        <stop offset="1" stopColor="#2020a0" />
      </linearGradient>
      <linearGradient id="wall">
        <stop offset="0" stopColor="#d09800" />
        <stop offset="0.35" stopColor="#ffc810" />
        <stop offset="0.65" stopColor="#f8c010" />
        <stop offset="1" stopColor="#a87800" />
      </linearGradient>
      <linearGradient id="rim">
        <stop offset="0" stopColor="#f8b810" />
        <stop offset="0.5" stopColor="#ffc80c" />
        <stop offset="0.85" stopColor="#f4b808" />
        <stop offset="1" stopColor="#c08800" />
      </linearGradient>
      <linearGradient id="gold" x2="1" y2="0.4">
        <stop offset="0" stopColor="#f0b818" />
        <stop offset="1" stopColor="#c08c08" />
      </linearGradient>
    </defs>

    <path d="M257 210 H269 V264 Q263 269 257 264Z" fill="url(#shank)" />
    <path d="M245 190 V203 L249 210 L258 213 H269 L277 210 L282 203 V190Z" fill="url(#steel)" />
    <path d="M226 152 L228 177 L235 186 L245 193 Q264 199 282 193 L293 185 L299 176 L300 152Z" fill="url(#steel)" />
    <path d="M239 134 L229 143 L226 154 L230 167 L240 177 L254 182 L272 182 L287 177 L297 167 L300 155 L296 142 L284 133Z" fill="#a0a0d0" />
    <path d="M245 117 H282 L289 155 Q289 166 280 171 Q264 179 246 171 Q237 166 237 155Z" fill="url(#steel)" />

    <path d="M311 220 L351 241 Q341 247 335 254 Q306 253 279 255Z" fill="#00ac38" />
    <path d="M279 255 Q306 253 335 254 V274 Q306 271 279 273Z" fill="#ffd000" />
    <path d="M335 254 Q341 247 351 241 V260 Q341 265 335 274Z" fill="url(#gold)" />

    <path d="M270 341 Q304 322 337 323 Q366 325 387 336 Q388 354 414 362 L426 365 L389 404Z" fill="#00ac38" />
    <path d="M270 341 L389 404 V418 H384 L270 360Z" fill="#00842a" />
    <path d="M389 404 L426 365 V384 L390 419Z" fill="#007c24" />

    <path d="M406 272 L406 292 Q440 309 469 336 V317 Q436 280 406 272Z" fill="url(#gold)" />
    <path d="M406 271 L477 308 L469 318 Q440 286 406 271Z" fill="#00ac38" />
    <path d="M469 318 L477 308 V328 L469 336Z" fill="#009830" />

    <path d="M380 280 L386 272 V287 L380 284Z" fill="#d09808" />
    <path d="M260 322 Q300 310 337 311 Q390 312 410 335 V360 Q405 346 387 336 Q363 323 334 324 Q300 325 270 343 L262 346Z" fill="url(#rim)" />
    <path d="M282 276 Q317 271 348 277 Q353 274 353 269 Q354 258 370 258 Q386 260 386 271 L383 280 Q383 286 388 288 Q418 299 440 316 L409 333 Q398 319 374 315 Q326 306 268 326 L262 325Z" fill="#ffec00" />
    <ellipse cx="370" cy="271" rx="8" ry="6" fill="url(#wall)" />
    <path d="M365 276 Q370 272 375 276 Q370 279 365 276Z" fill="#ffe000" />

    <path d="M231 311 V333 Q233 345 249 347 Q261 347 270 343 L292 330 L268 326 L295 299 V287Z" fill="url(#rim)" />
    <path d="M266 327 L295 297 V290 L262 323Z" fill="#e0ac08" />
    <path d="M268 326 L295 298 L300 305 L287 321Z" fill="#ffec00" />
    <path fillRule="evenodd" d="M231 311 Q231 305 236 300 L257 278 Q264 272 276 272 Q295 275 295 289 Q295 294 290 299 L268 321 Q260 328 249 327 Q231 325 231 311Z M242 311 Q242 318 249 319 Q256 320 262 314 L280 296 Q283 293 283 289 Q282 281 274 281 Q267 280 262 285 L246 301 Q242 306 242 311Z" fill="#00ac38" />
    <path d="M242 311 Q242 318 249 319 Q256 320 262 314 L280 296 Q283 293 283 289 Q282 281 274 281 Q267 280 262 285 L246 301 Q242 306 242 311Z" fill="#000098" />
    <path d="M242 311 Q242 306 246 301 L262 285 Q266 281 265 284 V300 Q258 302 256 306 L250 318 Q242 318 242 311Z" fill="#b88c10" />
    <path d="M264 284 Q267 280 274 281 Q282 281 283 289 L282 294 L277 299 Q272 298 264 301Z" fill="url(#wall)" />

    <path d="M408 331 V355 Q412 367 430 367 Q449 366 451 355 V331Z" fill="url(#wall)" />
    <ellipse cx="430" cy="331" rx="21.5" ry="16" fill="#00ac38" />
    <ellipse cx="430" cy="331" rx="10" ry="8" fill="#fff050" />
    <ellipse cx="430" cy="332" rx="8" ry="7" fill="url(#wall)" />
    <path d="M426 337 Q430 332 435 337 Q430 341 426 337Z" fill="#000098" />
  </svg>
);

/* ---------- task bar ---------- */

const TaskBar = styled.nav`
  display: flex;
  align-items: center;
  height: 16px;
  background: linear-gradient(#3c80f0, #245edb 20%, #2660dc 80%, #1c48b0);
  color: #e4eeff;
`;

const Start = styled.button`
  display: flex;
  align-items: center;
  gap: 2px;
  width: 55px;
  height: 16px;
  padding-left: 6px;
  border-radius: 0 5px 5px 0;
  background: linear-gradient(#5cb45c, #389838 30%, #308830);
  color: #fff;
  font: italic bold 10px/15px "Open Sans", sans-serif;
`;

const Quick = styled.div`
  display: flex;
  justify-content: flex-end;
  align-items: center;
  gap: 4px;
  width: 59px;
  padding-right: 2px;
`;

const Task = styled.button<{ $active?: boolean }>`
  display: flex;
  align-items: center;
  gap: 2px;
  flex: 1 1 0;
  min-width: 0;
  height: 14px;
  margin-left: 1px;
  padding-left: 5px;
  border-radius: 2px;
  white-space: nowrap;
  overflow: hidden;
  background: ${(p) => (p.$active ? "#1c48b0" : "linear-gradient(#68a0fc, #3c7cf0 25%, #3876e8)")};
`;

const Tray = styled.div`
  display: flex;
  align-items: center;
  gap: 4px;
  width: 52px;
  height: 16px;
  margin-left: 1px;
  padding-left: 2px;
  background: linear-gradient(#30a8f8, #1290e8 25%, #1488e0);
  color: #fff;
`;

const tasks: [string, string][] = [
  ["green", "Macromed..."],
  ["firefox", "OTA Wha..."],
  ["yellowApp", "Macromed..."],
  ["acad", "AutoCAD ..."],
  ["media", "Windows ..."],
  ["folder", "2 Windo...  ▾"],
  ["mcx", "Masterca..."],
];

export default function App() {
  return (
    <>
      <Global />
      <Window>
        <TitleBar>
          <Icon name="mcx" size={10} />
          <Title>{"Mastercam Mill X3  H:\\MASTERCAM\\PROJECTS\\BRIAN_3.EMCX"}</Title>
          <Caption>
            <CaptionButton aria-label="Minimize"><Icon name="minimize" size={9} /></CaptionButton>
            <CaptionButton aria-label="Restore"><Icon name="restore" size={9} /></CaptionButton>
            <CaptionButton $danger aria-label="Close"><Icon name="close" size={9} /></CaptionButton>
          </Caption>
        </TitleBar>
        <MenuBar>
          {["File", "Edit", "View", "Analyze", "Create", "Solids", "Xform", "Machine Type", "Toolpaths", "Screen", "Settings", "Help"].map((m) => (
            <MenuItem key={m}>{m}</MenuItem>
          ))}
        </MenuBar>
        <ToolRow $height={20}>
          <ToolGroups groups={fileTools} />
          <Spacer $grow={5} />
        </ToolRow>
        <ToolRow $height={16}>
          <ToolGroups groups={sketchTools} />
          <Spacer $grow={54} />
        </ToolRow>
        <Body>
          <VerifyDialog />
          <Work>
            <Ribbon $height={18}>
              <Spacer $grow={3} />
              <PlainButton $span={12}>Z</PlainButton>
              <Spacer $grow={3} />
              <Combo label="Z depth" value="0.0" span={43} muted tone="#f8f6e4" />
              <Spacer $grow={2} />
              <Cluster $span={66}><Tools list="gBolt gBang gBox v help" raised /></Cluster>
              <Spacer $grow={4} />
              <Divider />
              <Spacer $grow={7} />
              <PlainButton $span={27} $muted>All...</PlainButton>
              <Spacer $grow={5} />
              <PlainButton $span={27}>Only...</PlainButton>
              <Spacer $grow={4} />
              <Cluster $span={13}><Tools list="gPie" raised /></Cluster>
              <Spacer $grow={5} />
              <Combo label="Selection" value="In" span={41} muted faint tone="#f8f6e4" />
              <Spacer $grow={3} />
              <Cluster $span={50}><Tools list="gSelect v 3 gCursor gDot" /></Cluster>
              <Spacer $grow={6} />
              <Cluster $span={145}>
                <Tools list="gDot gDot gDot 4 gPie gArc 4 gCheck 4 gNo gRound 4 gQuestion 4" raised />
              </Cluster>
            </Ribbon>
            <HelpLine $height={19}>
              <button aria-label="Help"><Icon name="help" size={14} /></button>
            </HelpLine>
            <ToolRow $height={17}>
              <Cluster $span={107}>
                <Tools list="redDash surface 4 hook 4 shield shield2 4 redArrow 4 ramp 2" />
              </Cluster>
              <ToolGroup $span={361} />
            </ToolRow>
            <ViewRow>
              <Viewport><Scene /></Viewport>
              <SideBar>
                <SideGroup $grow>
                  {["plane", "blueWindow", "open"].map((n) => (
                    <SideButton key={n} aria-label={n}><Icon name={n} size={11} /></SideButton>
                  ))}
                </SideGroup>
                <SideGroup>
                  {["gPlus", "gWave", "gSlash", "gRing", "gFlag", "gSquare", "gDot", "gRing"].map((n, i) => (
                    <SideButton key={i} aria-label={n}><Icon name={n} size={10} /></SideButton>
                  ))}
                </SideGroup>
                <SideGroup>
                  {["gNodes", "gNodes", "gBox"].map((n, i) => (
                    <SideButton key={i} aria-label={n}><Icon name={n} size={10} /></SideButton>
                  ))}
                </SideGroup>
              </SideBar>
            </ViewRow>
            <StatusBar>
              <Spacer $grow={24} />
              <StatusButton $span={15}>3D</StatusButton>
              <Spacer $grow={3} />
              <StatusButton $span={23}>Gview</StatusButton>
              <Spacer $grow={2} />
              <StatusButton $span={24}>Planes</StatusButton>
              <StatusText $span={14}>Z:</StatusText>
              <Combo label="Z" value="0.0" span={44} bold tone="#ffff80" />
              <Spacer $grow={2} />
              <StatusButton $span={17} $tone="#00f000">10</StatusButton>
              <StatusButton $span={12} aria-label="Colour"><Icon name="solidDown" size={7} /></StatusButton>
              <StatusText $span={25}>Level:</StatusText>
              <Combo label="Level" value="1" span={51} />
              <Spacer $grow={2} />
              <StatusButton $span={34}>Attributes</StatusButton>
              <Spacer $grow={3} />
              <Combo label="Point style" value="#" span={17} />
              <Spacer $grow={3} />
              <Combo label="Line style" value="" span={35} line={2} />
              <Spacer $grow={3} />
              <Combo label="Line width" value="" span={38} line={1} />
              <Spacer $grow={4} />
              <StatusButton $span={25}>WCS</StatusButton>
              <Spacer $grow={2} />
              <StatusButton $span={26}>Groups</StatusButton>
              <Spacer $grow={3} />
              <StatusButton $span={9}>!</StatusButton>
              <Spacer $grow={2} />
              <StatusButton $span={8}>?</StatusButton>
            </StatusBar>
          </Work>
        </Body>
        <TaskBar>
          <Start><Icon name="flag" size={11} />start</Start>
          <Quick>
            <Icon name="desktop" size={10} />
            <Icon name="ie" size={11} />
            <Icon name="firefox" size={10} />
            »
          </Quick>
          {tasks.map(([icon, label], i) => (
            <Task key={i} $active={icon === "mcx"}>
              <Icon name={icon} size={9} />
              {label}
            </Task>
          ))}
          <Tray><Icon name="tray" size={11} />11:10 PM</Tray>
        </TaskBar>
      </Window>
    </>
  );
}
